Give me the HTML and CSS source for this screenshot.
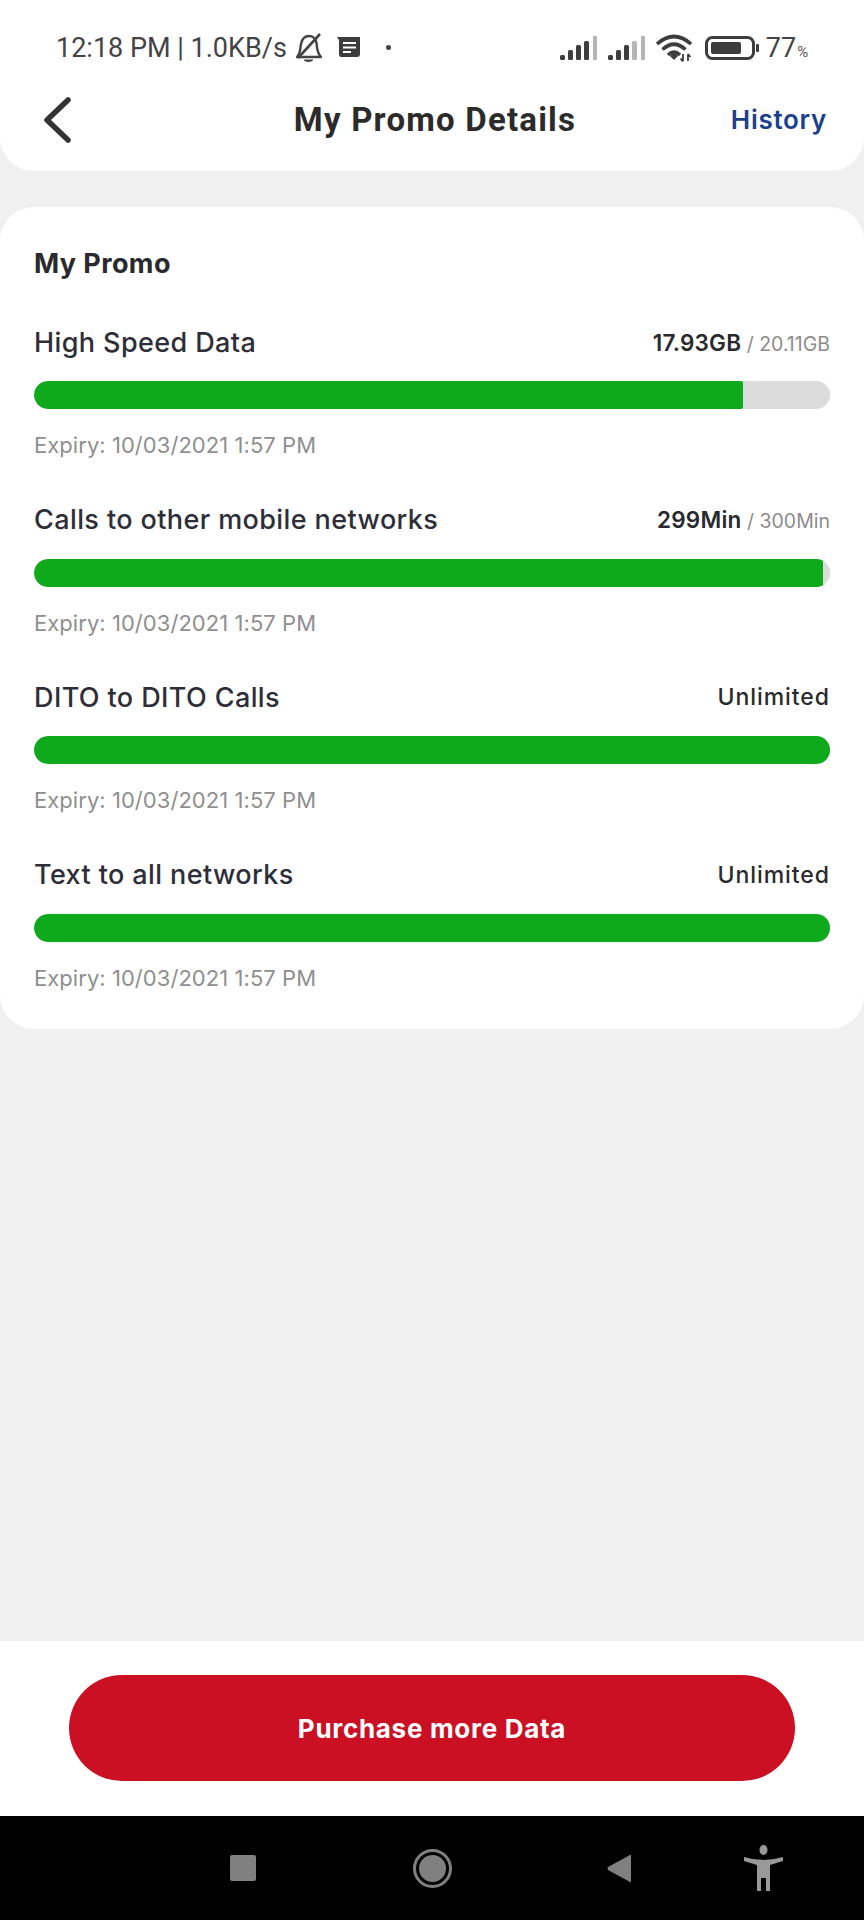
FILE: index.html
```html
<!DOCTYPE html>
<html lang="en">
<head>
<meta charset="utf-8">
<title>My Promo Details</title>
<link rel="stylesheet" href="styles.css">
</head>
<body>
<div class="screen">
  <header class="top">
    <div class="status">
      <span class="status-text">12:18 PM | 1.0KB/s</span>
      <svg class="ic-bell" viewBox="0 0 27 30" width="27" height="30"><path d="M2 24 C6 20 5 15 6 11 C7 6 10 3 14 3 C18 3 21 6 21.500 10 C22 15 22 20 26 24 Z" fill="none" stroke="#444" stroke-width="2.400" stroke-linejoin="round"/><path d="M3 25 L25 1" stroke="#444" stroke-width="2.600"/><path d="M9 26.500 H18 V27.500 Q13.500 30.500 9 27.500 Z" fill="#444"/></svg>
      <svg class="ic-note" viewBox="0 0 23 20" width="23" height="20"><path d="M0 0 H23 V17 Q23 20 20 20 H4 Q2 20 2 17 V3 Z" fill="#3d3d3d"/><path d="M6 6 H19 M6 10.500 H19 M6 15 H14" stroke="#fff" stroke-width="2"/></svg>
      <span class="dot"></span>
      <svg class="ic-signal" viewBox="0 0 37 24" width="37" height="24"><g fill="#3d3d3d"><rect x="0" y="19" width="5" height="5" rx="1.500"/><rect x="8" y="14" width="5" height="10" rx="1.500"/><rect x="16" y="9" width="5" height="15" rx="1.500"/><rect x="24" y="5" width="5" height="19" rx="1.500"/></g><rect x="33" y="0" width="4" height="24" rx="1" fill="#b5b5b5"/></svg>
      <svg class="ic-signal ic-signal2" viewBox="0 0 37 24" width="37" height="24"><g fill="#3d3d3d"><rect x="0" y="19" width="5" height="5" rx="1.500"/><rect x="8" y="14" width="5" height="10" rx="1.500"/><rect x="16" y="9" width="5" height="15" rx="1.500"/></g><rect x="24" y="5" width="5" height="19" rx="1.500" fill="#b5b5b5"/><rect x="33" y="0" width="4" height="24" rx="1" fill="#b5b5b5"/></svg>
      <svg class="ic-wifi" viewBox="0 0 37 28" width="37" height="28"><g fill="none" stroke="#3d3d3d" stroke-width="3.600"><path d="M1 10 Q18 -5 35 10"/><path d="M6.500 15.500 Q18 5 29.500 15.500"/><path d="M12 21 Q18 15.500 24 21"/></g><path d="M14 22 L18 18.500 L22 22 L18 26 Z" fill="#3d3d3d"/><path d="M27 20 V27 M24.500 24.500 L27 27.500 M32 27 V20 M32 20 L34.500 23" stroke="#3d3d3d" stroke-width="1.800" fill="none"/></svg>
      <svg class="ic-batt" viewBox="0 0 55 24" width="55" height="24"><rect x="1.500" y="1.500" width="47" height="21" rx="6" fill="none" stroke="#3d3d3d" stroke-width="3"/><rect x="6" y="6" width="30" height="12" rx="2" fill="#3d3d3d"/><rect x="51" y="8" width="3" height="8" rx="1" fill="#3d3d3d"/></svg>
      <span class="status-text batt">77</span><span class="pct">%</span>
    </div>
    <nav class="nav">
      <svg class="back" viewBox="0 0 28 46" width="28" height="46"><path d="M25 3 L4 23 L25 43" fill="none" stroke="#333" stroke-width="5.500" stroke-linecap="round" stroke-linejoin="round"/></svg>
      <h1 class="title">My Promo Details</h1>
      <a class="history">History</a>
    </nav>
  </header>

  <main class="main">
    <section class="card">
      <h2 class="card-title">My Promo</h2>
      <div class="rows">
        <article class="row">
          <div class="row-head"><span class="name">High Speed Data</span><span class="amount">17.93GB<span class="total"> / 20.11GB</span></span></div>
          <div class="track"><div class="fill" style="width:89.1%"></div></div>
          <div class="expiry">Expiry: 10/03/2021 1:57 PM</div>
        </article>
        <article class="row">
          <div class="row-head"><span class="name">Calls to other mobile networks</span><span class="amount">299Min<span class="total"> / 300Min</span></span></div>
          <div class="track"><div class="fill" style="width:99.1%"></div></div>
          <div class="expiry">Expiry: 10/03/2021 1:57 PM</div>
        </article>
        <article class="row">
          <div class="row-head"><span class="name">DITO to DITO Calls</span><span class="amount unlimited">Unlimited</span></div>
          <div class="track"><div class="fill" style="width:100%"></div></div>
          <div class="expiry">Expiry: 10/03/2021 1:57 PM</div>
        </article>
        <article class="row">
          <div class="row-head"><span class="name">Text to all networks</span><span class="amount unlimited">Unlimited</span></div>
          <div class="track"><div class="fill" style="width:100%"></div></div>
          <div class="expiry">Expiry: 10/03/2021 1:57 PM</div>
        </article>
      </div>
    </section>
  </main>

  <footer class="footer"><button class="cta">Purchase more Data</button></footer>

  <div class="navbar">
    <span class="nb-square"></span>
    <svg class="nb-home" viewBox="0 0 39 39" width="39" height="39"><circle cx="19.500" cy="19.500" r="18" fill="none" stroke="#808080" stroke-width="3"/><circle cx="19.500" cy="19.500" r="13.500" fill="#808080"/></svg>
    <svg class="nb-back" viewBox="0 0 24 29" width="24" height="29"><path d="M23 1 Q24 0 24 2 V27 Q24 29 23 28 L1 16 Q0 14.500 1 13 Z" fill="#808080"/></svg>
    <svg class="nb-access" viewBox="0 0 39 46" width="39" height="46"><ellipse cx="19.500" cy="5" rx="4" ry="5" fill="#999"/><path d="M0 12 Q10 15 19.500 15 Q29 15 39 12 L39 16 L26 20 V46 H22 V33 H17 V46 H13 V20 L0 16 Z" fill="#999"/></svg>
  </div>
</div>
</body>
</html>
```
FILE: styles.css
```css
* { box-sizing: border-box; }
html, body { margin: 0; padding: 0; }
body { background: #f0f0f0; font-family: "Inter", "Liberation Sans", sans-serif; }
.screen { width: 864px; height: 1920px; display: flex; flex-direction: column; overflow: hidden; }

.top { background: #fff; height: 171px; padding-top: 30px; border-radius: 0 0 34px 34px; }
.status { height: 36px; display: flex; align-items: center; padding-left: 56px; }
.status-text { font-family: "Roboto", sans-serif; font-size: 27px; color: #444; line-height: 36px; white-space: nowrap; }
.ic-bell { margin-left: 8px; }
.ic-note { margin-left: 15px; margin-top: -2px; }
.dot { width: 5px; height: 5px; border-radius: 50%; background: #444; margin-left: 26px; margin-top: -2px; }
.ic-signal { margin-left: 169px; }
.ic-signal2 { margin-left: 11px; }
.ic-wifi { margin-left: 11px; }
.ic-batt { margin-left: 12px; }
.batt { margin-left: 6px; }
.pct { font-family: "Roboto", sans-serif; font-size: 15px; color: #555; margin-top: 8px; margin-left: 1px; }

.nav { height: 107px; display: grid; grid-template-columns: 1fr auto 1fr; align-items: center; padding: 0 37px 0 43px; }
.back { display: block; }
.title { margin: 0; font-family: "Roboto", sans-serif; font-weight: 700; font-size: 33px; letter-spacing: 1.2px; color: #2b2b2b; }
.history { justify-self: end; font-family: "Inter", sans-serif; font-weight: 600; font-size: 26px; letter-spacing: 0.7px; color: #1c3f8f; }

.main { flex: 1; padding-top: 36px; }
.card { background: #fff; height: 822px; border-radius: 34px; padding: 41px 34px 0; }
.card-title { margin: 0 0 45px; font-size: 27px; letter-spacing: 0.4px; line-height: 32px; font-weight: 700; color: #2a2a2e; }
.rows { display: flex; flex-direction: column; gap: 43.500px; }
.row { height: 134px; display: flex; flex-direction: column; }
.row-head { height: 34px; display: flex; justify-content: space-between; align-items: center; }
.name { font-size: 27px; letter-spacing: 0.4px; font-weight: 500; color: #2e2e38; }
.amount { font-size: 22.500px; letter-spacing: 0.2px; font-weight: 600; color: #2a2a2e; }
.unlimited { font-size: 23px; letter-spacing: 0.95px; font-weight: 500; line-height: 36px; }
.total { font-size: 19.500px; letter-spacing: 0; font-weight: 400; color: #8c8c8c; }
.track { margin-top: 22px; height: 28px; background: #dcdcdc; border-radius: 14px; overflow: hidden; }
.fill { height: 100%; background: #0fa91c; border-radius: 14px 2px 2px 14px; }
.expiry { margin-top: 22px; line-height: 28px; font-size: 22px; letter-spacing: 0.05px; color: #8f8f8f; }

.footer { height: 175px; background: #fff; padding: 34px 69px 0; }
.cta { display: block; width: 726px; height: 106px; border: 0; border-radius: 53px; background: #cc1024; color: #fff; font-family: "Inter", sans-serif; font-weight: 700; font-size: 26px; letter-spacing: 0.7px; }

.navbar { height: 104px; background: #000; display: flex; align-items: flex-start; }
.nb-square { width: 26px; height: 26px; margin: 39px 0 0 230px; background: #808080; border-radius: 2px; }
.nb-home { margin: 33px 0 0 157px; }
.nb-back { margin: 38px 0 0 155px; }
.nb-access { margin: 29px 0 0 113px; }
```
